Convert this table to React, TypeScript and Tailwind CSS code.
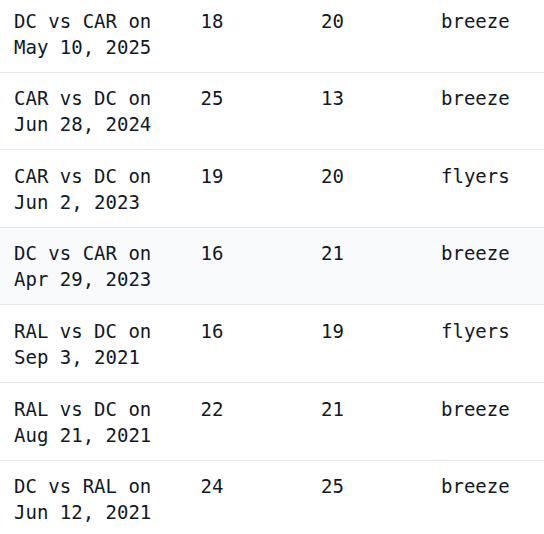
import React from "react";

type Row = { match: string; date: string; a: number; b: number; winner: string; highlight?: boolean };

const rows: Row[] = [
  { match: "DC vs CAR on", date: "May 10, 2025", a: 18, b: 20, winner: "breeze" },
  { match: "CAR vs DC on", date: "Jun 28, 2024", a: 25, b: 13, winner: "breeze" },
  { match: "CAR vs DC on", date: "Jun 2, 2023", a: 19, b: 20, winner: "flyers" },
  { match: "DC vs CAR on", date: "Apr 29, 2023", a: 16, b: 21, winner: "breeze", highlight: true },
  { match: "RAL vs DC on", date: "Sep 3, 2021", a: 16, b: 19, winner: "flyers" },
  { match: "RAL vs DC on", date: "Aug 21, 2021", a: 22, b: 21, winner: "breeze" },
  { match: "DC vs RAL on", date: "Jun 12, 2021", a: 24, b: 25, winner: "breeze" },
];

export default function App() {
  return (
    <div
      className="w-[544px] h-[534px] overflow-hidden bg-white text-[#111827]"
      style={{ fontFamily: '"DejaVu Sans Mono", monospace' }}
    >
      <div className="-mt-[4.9px] text-[19px] leading-[26px]">
        {rows.map((r, i) => (
          <div
            key={i}
            className={`grid grid-cols-[200.5px_120.5px_120px_1fr] border-b border-[#e5e7eb] pt-[12.6px] pb-[12px] ${
              r.highlight ? "bg-[#f9fafb]" : "bg-white"
            }`}
          >
            <div className="pl-[14px] whitespace-nowrap">
              <div>{r.match}</div>
              <div>{r.date}</div>
            </div>
            <div>{r.a}</div>
            <div>{r.b}</div>
            <div>{r.winner}</div>
          </div>
        ))}
      </div>
    </div>
  );
}
